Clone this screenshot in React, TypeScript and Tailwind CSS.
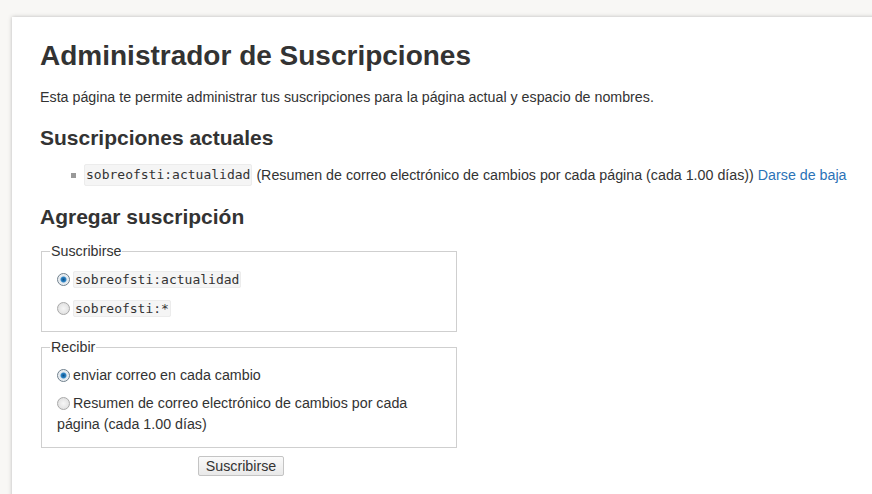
import React from 'react';

const mono = { fontFamily: '"DejaVu Sans Mono", "Liberation Mono", monospace' };

const Code: React.FC<{ children: React.ReactNode }> = ({ children }) => (
  <code
    className="bg-[#f5f5f5] border border-[#ececec] rounded-[2px] px-[1px] text-[13px] text-[#333]"
    style={mono}
  >
    {children}
  </code>
);

const Radio: React.FC<{ checked?: boolean }> = ({ checked }) => (
  <span
    className={
      'inline-block align-[-2px] w-[13px] h-[13px] rounded-full border mr-[3px] ' +
      (checked
        ? 'border-[#6f7f8c] bg-[radial-gradient(circle,#0f4f86_0%,#2d86c8_32%,#dfe6ec_44%,#ffffff_100%)]'
        : 'border-[#a9a9a9] bg-[radial-gradient(circle,#f6f6f6_0%,#dadada_100%)]')
    }
  />
);

const Fieldset: React.FC<{ legend: string; children: React.ReactNode }> = ({ legend, children }) => (
  <fieldset className="border border-[#cfcfcf] w-[416px]">
    <legend className="ml-[8px] px-[1px] text-[14.25px] leading-[16px]">{legend}</legend>
    <div className="px-[15px] pt-[6px] pb-[8px]">{children}</div>
  </fieldset>
);

export default function App() {
  return (
    <div
      className="min-h-[494px] bg-[#f8f7f5] pt-[17px] pl-[12px] overflow-hidden text-[#333]"
      style={{ fontFamily: '"Liberation Sans", Arial, sans-serif' }}
    >
      <div className="bg-white w-[900px] min-h-[500px] shadow-[0_0_4px_rgba(0,0,0,0.25)] pl-[28px] pt-[22px]">
        <h1 className="text-[28px] font-bold leading-[34px]">Administrador de Suscripciones</h1>
        <p className="text-[14.25px] leading-[20px] mt-[14px]">
          Esta página te permite administrar tus suscripciones para la página actual y espacio de nombres.
        </p>

        <h2 className="text-[21px] font-bold leading-[26px] mt-[18px]">Suscripciones actuales</h2>
        <ul className="mt-[13px] pl-[31px]">
          <li className="flex items-center text-[14.25px] leading-[20px]">
            <span className="w-[5px] h-[5px] bg-[#999] mr-[8px]" />
            <Code>sobreofsti:actualidad</Code>
            <span className="ml-[4px]">
              (Resumen de correo electrónico de cambios por cada página (cada 1.00 días))
            </span>
            <a className="ml-[4px] text-[#2b73b7]" href="#">
              Darse de baja
            </a>
          </li>
        </ul>

        <h2 className="text-[21px] font-bold leading-[26px] mt-[18px]">Agregar suscripción</h2>

        <form className="mt-[13px] pl-[1px]">
          <Fieldset legend="Suscribirse">
            <div className="text-[14.25px] leading-[28px]">
              <label className="block">
                <Radio checked />
                <Code>sobreofsti:actualidad</Code>
              </label>
              <label className="block">
                <Radio />
                <Code>sobreofsti:*</Code>
              </label>
            </div>
          </Fieldset>
          <div className="h-[7px]" />
          <Fieldset legend="Recibir">
            <div className="text-[14.25px]">
              <label className="block leading-[28px]">
                <Radio checked />
                enviar correo en cada cambio
              </label>
              <label className="block leading-[21px] mt-[4px] mb-[4px]">
                <Radio />
                Resumen de correo electrónico de cambios por cada página (cada 1.00 días)
              </label>
            </div>
          </Fieldset>
          <div className="w-[400px] flex justify-center mt-[8px]">
            <button
              type="button"
              className="text-[14.25px] leading-[18px] px-[7px] border border-[#c4c4c4] rounded-[2px] bg-[linear-gradient(#fafafa,#e9e9e9)] text-[#333]"
            >
              Suscribirse
            </button>
          </div>
        </form>
      </div>
    </div>
  );
}
